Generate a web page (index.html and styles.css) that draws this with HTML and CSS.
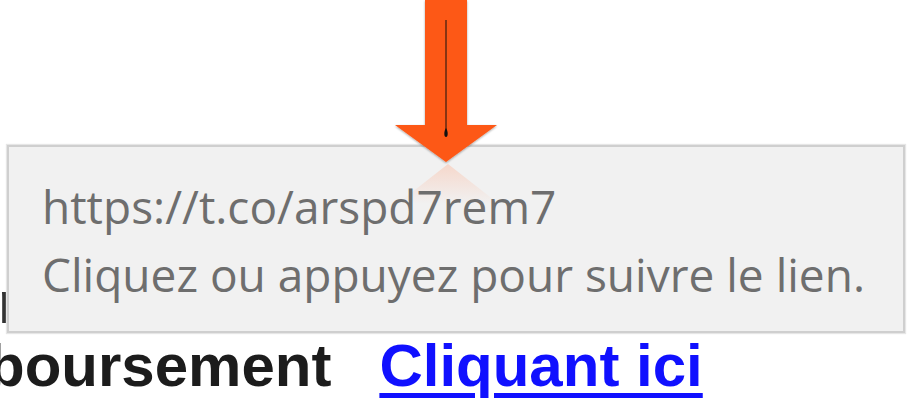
FILE: index.html
```html
<!DOCTYPE html>
<html lang="fr">
<head>
<meta charset="utf-8">
<title>Lien</title>
<link rel="stylesheet" href="styles.css">
</head>
<body>
<main class="page">
  <p class="line hidden-line">n</p>
  <p class="line refund-line">
    <span class="label">boursement</span>
    <a class="link" href="#">Cliquant ici</a>
  </p>
</main>

<div class="tooltip" role="tooltip">
  <div class="tip-url">https://t.co/arspd7rem7</div>
  <div class="tip-hint">Cliquez ou appuyez pour suivre le lien.</div>
  <div class="tip-glow"></div>
</div>

<svg class="arrow" width="110" height="170" viewBox="0 0 110 170" aria-hidden="true">
  <defs>
    <filter id="sh" x="-20%" y="-20%" width="140%" height="140%">
      <feGaussianBlur in="SourceAlpha" stdDeviation="1.2"/>
      <feOffset dx="0" dy="1" result="b"/>
      <feComponentTransfer><feFuncA type="linear" slope="0.35"/></feComponentTransfer>
      <feMerge><feMergeNode/><feMergeNode in="SourceGraphic"/></feMerge>
    </filter>
  </defs>
  <path filter="url(#sh)" d="M35 0 H77 V125 H107 L56 162 L5 125 H35 Z" fill="#fd5817"/>
  <path d="M56 20 V131" stroke="#111" stroke-width="1" fill="none"/>
  <path d="M56 128 C53.5 132 54 137 56 137 C58 137 58.5 132 56 128 Z" fill="#111"/>
</svg>
</body>
</html>
```

FILE: styles.css
```css
html, body {
  margin: 0;
  padding: 0;
  background: #ffffff;
  overflow: hidden;
}

body {
  width: 924px;
  height: 400px;
  position: relative;
}

.page {
  padding-top: 271px;
  font-family: "Liberation Sans", Arial, sans-serif;
  font-weight: bold;
  font-size: 60px;
  line-height: 63px;
  color: #1c1c1c;
}

.line {
  margin: 0;
  white-space: nowrap;
}

.hidden-line {
  margin-left: -2px;
  color: #333;
}

.refund-line {
  display: flex;
  gap: 48px;
  margin-left: -12px;
}

.link {
  color: #1010ff;
  text-decoration: underline;
  text-decoration-thickness: 5px;
  text-underline-offset: 7px;
}

.tooltip {
  position: absolute;
  left: 7px;
  top: 145px;
  width: 898px;
  height: 188px;
  box-sizing: border-box;
  border: 2px solid #cfcfcf;
  box-shadow: 0 0 1px 1px #e6e6e6;
  background: #f1f1f1;
  padding: 25px 0 0 33px;
  font-family: "Open Sans", "Noto Sans", sans-serif;
  font-size: 46px;
  line-height: 68px;
  color: #6e6e6e;
  overflow: hidden;
}

.tip-url, .tip-hint {
  white-space: nowrap;
  position: relative;
  z-index: 1;
}

.tip-glow {
  position: absolute;
  left: 388px;
  top: 17px;
  width: 102px;
  height: 40px;
  background: linear-gradient(to bottom, rgba(250, 190, 165, 0.5), rgba(250, 215, 200, 0));
  clip-path: polygon(50% 0, 100% 100%, 0 100%);
}

.arrow {
  position: absolute;
  left: 390px;
  top: 0;
}
```
